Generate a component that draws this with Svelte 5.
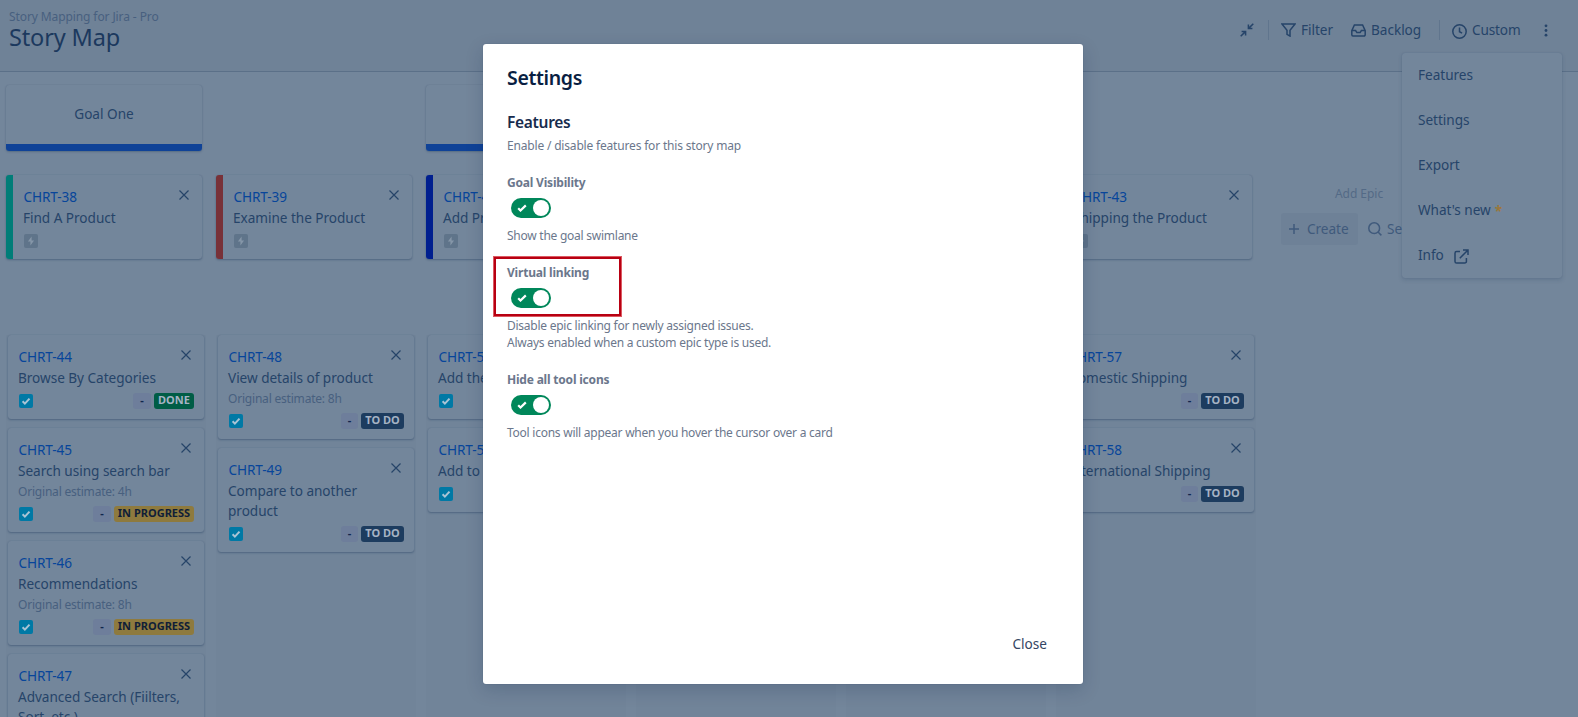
<script>
  const goals = [{ name: 'Goal One' }, null, { name: '' }, null, null, null];

  const epics = [
    { id: 'CHRT-38', title: 'Find A Product', tone: 'teal' },
    { id: 'CHRT-39', title: 'Examine the Product', tone: 'red' },
    { id: 'CHRT-40', title: 'Add Product', tone: 'navy' },
    null,
    null,
    { id: 'CHRT-43', title: 'Shipping the Product', tone: 'navy' }
  ];

  const columns = [
    [
      { id: 'CHRT-44', title: 'Browse By Categories', status: 'DONE' },
      { id: 'CHRT-45', title: 'Search using search bar', estimate: '4h', status: 'IN PROGRESS' },
      { id: 'CHRT-46', title: 'Recommendations', estimate: '8h', status: 'IN PROGRESS' },
      { id: 'CHRT-47', title: 'Advanced Search (Fiilters, Sort, etc.)', status: 'TO DO' }
    ],
    [
      { id: 'CHRT-48', title: 'View details of product', estimate: '8h', status: 'TO DO' },
      { id: 'CHRT-49', title: 'Compare to another product', status: 'TO DO' }
    ],
    [
      { id: 'CHRT-50', title: 'Add the', status: 'TO DO' },
      { id: 'CHRT-51', title: 'Add to', status: 'TO DO' }
    ],
    [],
    [],
    [
      { id: 'CHRT-57', title: 'Domestic Shipping', status: 'TO DO' },
      { id: 'CHRT-58', title: 'International Shipping', status: 'TO DO' }
    ]
  ];

  const tones = { DONE: 'done', 'IN PROGRESS': 'progress', 'TO DO': 'todo' };

  const menu = ['Features', 'Settings', 'Export', "What's new", 'Info'];

  const options = [
    { label: 'Goal Visibility', help: ['Show the goal swimlane'] },
    {
      label: 'Virtual linking',
      marked: true,
      help: ['Disable epic linking for newly assigned issues.', 'Always enabled when a custom epic type is used.']
    },
    { label: 'Hide all tool icons', help: ['Tool icons will appear when you hover the cursor over a card'] }
  ];
</script>

{#snippet cross()}
  <svg class="cross" width="10" height="10" viewBox="0 0 10 10"><path d="M.5.5l9 9M9.5.5l-9 9" /></svg>
{/snippet}

<div class="page">
  <header>
    <div class="heading">
      <div class="crumb">Story Mapping for Jira - Pro</div>
      <h1>Story Map</h1>
    </div>
    <div class="tools">
      <svg class="ico collapse" width="14" height="14" viewBox="0 0 14 14"><path d="M13.3.7L8.6 5.4M8.4 1.6v4h4M.7 13.3l4.7-4.7M1.6 8.4h4v4" /></svg>
      <span class="bar"></span>
      <div class="tool filter">
        <svg class="ico" width="15" height="14" viewBox="0 0 15 14"><path d="M.9.9h13.2L9 7.2v5.9L6 11.4V7.2z" /></svg>
        <span>Filter</span>
      </div>
      <div class="tool backlog">
        <svg class="ico" width="15" height="13" viewBox="0 0 15 13"><path d="M.8 6.6h3.8l1.3 2h3.2l1.3-2h3.8M3.4 1h8.2l2.6 5.6v4.2a1.2 1.2 0 0 1-1.2 1.2H2a1.2 1.2 0 0 1-1.2-1.2V6.6z" /></svg>
        <span>Backlog</span>
      </div>
      <span class="bar second"></span>
      <div class="tool custom">
        <svg class="ico clock" width="15" height="15" viewBox="0 0 15 15"><circle cx="7.5" cy="7.5" r="6.7" /><path d="M7.5 3.4v4.3l2.6 1.4" /></svg>
        <span>Custom</span>
      </div>
      <svg class="dots" width="4" height="13" viewBox="0 0 4 13"><circle cx="2" cy="1.8" r="1.4" /><circle cx="2" cy="6.5" r="1.4" /><circle cx="2" cy="11.2" r="1.4" /></svg>
    </div>
  </header>

  <main>
    <div class="row goals">
      {#each goals as goal}
        <div class="slot" class:goal={goal}>{goal?.name ?? ''}</div>
      {/each}
    </div>

    <div class="row epics">
      {#each epics as epic}
        {#if epic}
          <article class="epic {epic.tone}">
            <div class="top"><span class="id">{epic.id}</span>{@render cross()}</div>
            <div class="title">{epic.title}</div>
            <svg class="bolt" width="14" height="14" viewBox="0 0 14 14"><rect width="14" height="14" rx="2" /><path d="M7.6 2.6L3.9 7.6h2.5v3.8l3.7-5H7.6z" /></svg>
          </article>
        {:else}
          <div class="slot"></div>
        {/if}
      {/each}
      <div class="add">
        <div class="add-label">Add Epic</div>
        <div class="add-actions">
          <div class="create">
            <svg class="ico" width="10" height="10" viewBox="0 0 10 10"><path d="M5 0v10M0 5h10" /></svg>
            <span>Create</span>
          </div>
          <div class="search">
            <svg class="ico" width="14" height="14" viewBox="0 0 14 14"><circle cx="6.2" cy="6.2" r="5.4" /><path d="M10 10l3.4 3.4" /></svg>
            <span>Search</span>
          </div>
        </div>
      </div>
    </div>

    <div class="row stories">
      {#each columns as cards}
        <section class="column">
          {#each cards as card}
            <article class="story">
              <div class="top"><span class="id">{card.id}</span>{@render cross()}</div>
              <div class="title">{card.title}</div>
              {#if card.estimate}<div class="estimate">Original estimate: {card.estimate}</div>{/if}
              <div class="meta">
                <svg class="task" width="14" height="14" viewBox="0 0 14 14"><rect width="14" height="14" rx="2" /><path d="M3.6 7.2l2.3 2.4 4.6-5" /></svg>
                <span class="points {tones[card.status]}-points">-</span>
                <span class="badge {tones[card.status]}">{card.status}</span>
              </div>
            </article>
          {/each}
        </section>
      {/each}
    </div>
  </main>

  <nav class="menu">
    {#each menu as item}
      <div class="item">
        <span>{item}</span>
        {#if item === "What's new"}<span class="star">*</span>{/if}
        {#if item === 'Info'}
          <svg class="ico out" width="15" height="15" viewBox="0 0 15 15"><path d="M6 2.6H2.6A1.6 1.6 0 0 0 1 4.2v8.2A1.6 1.6 0 0 0 2.6 14h8.2a1.6 1.6 0 0 0 1.6-1.6V9M9 1h5v5M14 1L5.8 9.2" /></svg>
        {/if}
      </div>
    {/each}
  </nav>

  <div class="modal">
    <h2>Settings</h2>
    <h3>Features</h3>
    <p class="intro">Enable / disable features for this story map</p>
    {#each options as option}
      <div class="option">
        <div class="label">{option.label}</div>
        <div class="toggle">
          <svg width="10" height="8" viewBox="0 0 10 8"><path d="M1.2 4.2l2.3 2.3L8.8 1.4" /></svg>
          <span class="knob"></span>
        </div>
        {#each option.help as line}<div class="help">{line}</div>{/each}
        {#if option.marked}<div class="mark"></div>{/if}
      </div>
    {/each}
    <div class="footer"><span>Close</span></div>
  </div>
</div>

<style>
  :global(body) {
    overflow: hidden;
  }
  .page {
    position: relative;
    width: 1578px;
    height: 717px;
    overflow: hidden;
    background: #73869b;
    color: #264469;
    font: 13.6px/20px 'Noto Sans', 'Open Sans', sans-serif;
    letter-spacing: -0.03px;
    white-space: nowrap;
  }
  h1, h2, h3, p {
    margin: 0;
  }
  .ico, .cross {
    fill: none;
    stroke: #264469;
    stroke-width: 1.5;
    flex: none;
  }
  header {
    box-sizing: border-box;
    height: 72px;
    padding: 8px 30px 0 9px;
    display: flex;
    justify-content: space-between;
    background: #6f8297;
    border-bottom: 1px solid #5b7088;
  }
  .crumb {
    font-size: 12px;
    line-height: 17px;
    letter-spacing: -0.1px;
    color: #48607f;
  }
  h1 {
    font-size: 23.5px;
    line-height: 24px;
    font-weight: 400;
    letter-spacing: -0.15px;
    color: #1c395e;
  }
  .tools {
    display: flex;
    align-items: center;
    height: 44px;
  }
  .tool {
    display: flex;
    align-items: center;
    gap: 5px;
  }
  .bar {
    width: 1px;
    height: 20px;
    margin: 0 12px 0 14px;
    background: #60758d;
  }
  .filter { width: 70px; }
  .backlog { width: 70px; }
  .bar.second { margin: 0 12px 0 18px; }
  .custom {
    width: 92px;
    letter-spacing: -0.15px;
  }
  .clock { position: relative; top: 1px; }
  .dots { fill: #264469; }

  main {
    padding: 13px 0 0 6px;
  }
  .row {
    display: flex;
    gap: 14px;
  }
  .slot, .epic {
    box-sizing: border-box;
    flex: none;
    width: 196px;
  }
  .goals {
    height: 90px;
  }
  .goal {
    height: 66px;
    border-bottom: 7px solid #0f4297;
    border-radius: 3px;
    line-height: 57px;
    text-align: center;
    letter-spacing: 0;
    box-shadow: 0 1px 2px rgba(30, 55, 90, .3), 0 0 1px rgba(30, 55, 90, .2);
  }
  .epics {
    height: 160px;
  }
  .epic, .story {
    box-shadow: 0 1px 2px rgba(30, 55, 90, .38), 0 0 1px rgba(30, 55, 90, .22);
    border-radius: 3px;
  }
  .epic {
    height: 84px;
    padding: 12px 13px 0 10px;
    border-left: 7px solid #001f8f;
  }
  .epic.teal { border-color: #007d78; }
  .epic.red { border-color: #783138; }
  .top {
    display: flex;
    justify-content: space-between;
    height: 21px;
  }
  .id {
    padding-left: 0.6px;
    color: #07459a;
    letter-spacing: -0.12px;
  }
  .cross {
    margin-top: 3px;
    stroke-width: 1.2;
  }
  .bolt {
    display: block;
    margin: 6px 0 0 1px;
    fill: #5f748a;
  }
  .bolt path { fill: #8596a8; }
  .add {
    width: 186px;
    color: #405a7c;
  }
  .add-label {
    margin-top: 9px;
    font-size: 12px;
    text-align: center;
    color: #536a86;
  }
  .add-actions {
    display: flex;
    margin: 9px 0 0 15px;
  }
  .create, .search {
    display: flex;
    align-items: center;
    height: 32px;
  }
  .create {
    width: 69px;
    padding-left: 8px;
    gap: 8px;
    background: #6e8197;
    border-radius: 3px;
  }
  .search {
    margin-left: 10px;
    gap: 5px;
  }
  .add .ico { stroke: #405a7c; }

  .stories {
    gap: 10px;
  }
  .column {
    box-sizing: border-box;
    width: 200px;
    height: 400px;
    padding-left: 2px;
    display: flex;
    flex-direction: column;
    gap: 9px;
    background: #718499;
  }
  .story {
    box-sizing: border-box;
    flex: none;
    width: 196px;
    padding: 12px 10px 10px;
    background: #73869b;
  }
  .story .top { padding-right: 3px; }
  .title {
    white-space: normal;
  }
  .estimate {
    font-size: 12px;
    line-height: 19px;
    padding-top: 1px;
    letter-spacing: -0.2px;
    color: #48607f;
  }
  .meta {
    display: flex;
    align-items: center;
    margin-top: 5px;
    height: 16px;
  }
  .task {
    margin: 0 auto 0 1px;
    fill: #0079a5;
  }
  .task path {
    fill: none;
    stroke: #a9c4d5;
    stroke-width: 2;
  }
  .points, .badge {
    box-sizing: border-box;
    height: 16px;
    border-radius: 3px;
    font-size: 11px;
    line-height: 14px;
    font-weight: 700;
    text-align: center;
    letter-spacing: 0;
  }
  .points {
    width: 18px;
    margin-right: 3px;
    background: #6e7e9b;
    color: #10264d;
  }
  .todo-points { width: 17px; }
  .badge { color: #a5b3c4; }
  .done { width: 40px; background: #005d46; }
  .progress { width: 80px; background: #8e7a3e; color: #101e37; }
  .todo { width: 43px; background: #1d3c5f; }

  .menu {
    position: absolute;
    left: 1402px;
    top: 53px;
    width: 160px;
    background: #73869b;
    border-radius: 3px;
    box-shadow: 0 2px 4px rgba(30, 55, 90, .18), 0 0 1px rgba(30, 55, 90, .25);
  }
  .item {
    box-sizing: border-box;
    display: flex;
    align-items: center;
    height: 45px;
    padding: 0 0 2px 16px;
  }
  .star {
    margin: 3px 0 0 4px;
    color: #9b7739;
    font-weight: 700;
  }
  .out { margin: 4px 0 0 10px; }

  .modal {
    position: absolute;
    left: 483px;
    top: 44px;
    box-sizing: border-box;
    width: 600px;
    height: 640px;
    padding: 22px 24px 0;
    background: #fff;
    border-radius: 3px;
    box-shadow: 0 0 1px rgba(9, 30, 66, .35), 0 6px 18px rgba(9, 30, 66, .18);
    color: #6b778c;
    font-size: 12px;
    line-height: 17px;
    letter-spacing: -0.25px;
  }
  h2 {
    font: 600 19.5px/24px 'Noto Sans', sans-serif;
    letter-spacing: -0.35px;
    color: #091e42;
  }
  h3 {
    margin-top: 22px;
    font: 600 15.5px/20px 'Noto Sans', sans-serif;
    letter-spacing: -0.3px;
    color: #172b4d;
  }
  .intro {
    margin-top: 5px;
    letter-spacing: -0.18px;
  }
  .option {
    position: relative;
    margin-top: 20px;
  }
  .label {
    font-weight: 700;
    letter-spacing: -0.2px;
  }
  .toggle {
    box-sizing: border-box;
    display: flex;
    align-items: center;
    justify-content: space-between;
    width: 40px;
    height: 20px;
    margin: 7px 0 9px 4px;
    padding: 0 2px 0 6px;
    border-radius: 10px;
    background: #00875a;
  }
  .toggle path {
    fill: none;
    stroke: #fff;
    stroke-width: 2.2;
  }
  .knob {
    width: 16px;
    height: 16px;
    border-radius: 50%;
    background: #fff;
  }
  .mark {
    position: absolute;
    left: -13px;
    top: -7px;
    box-sizing: border-box;
    width: 127px;
    height: 59px;
    border: 2px solid #b80012;
    outline: 1px solid #dc5a62;
  }
  .footer {
    position: absolute;
    right: 36px;
    bottom: 30px;
    color: #344563;
    font-size: 13.6px;
    line-height: 20px;
    letter-spacing: 0;
  }
</style>
